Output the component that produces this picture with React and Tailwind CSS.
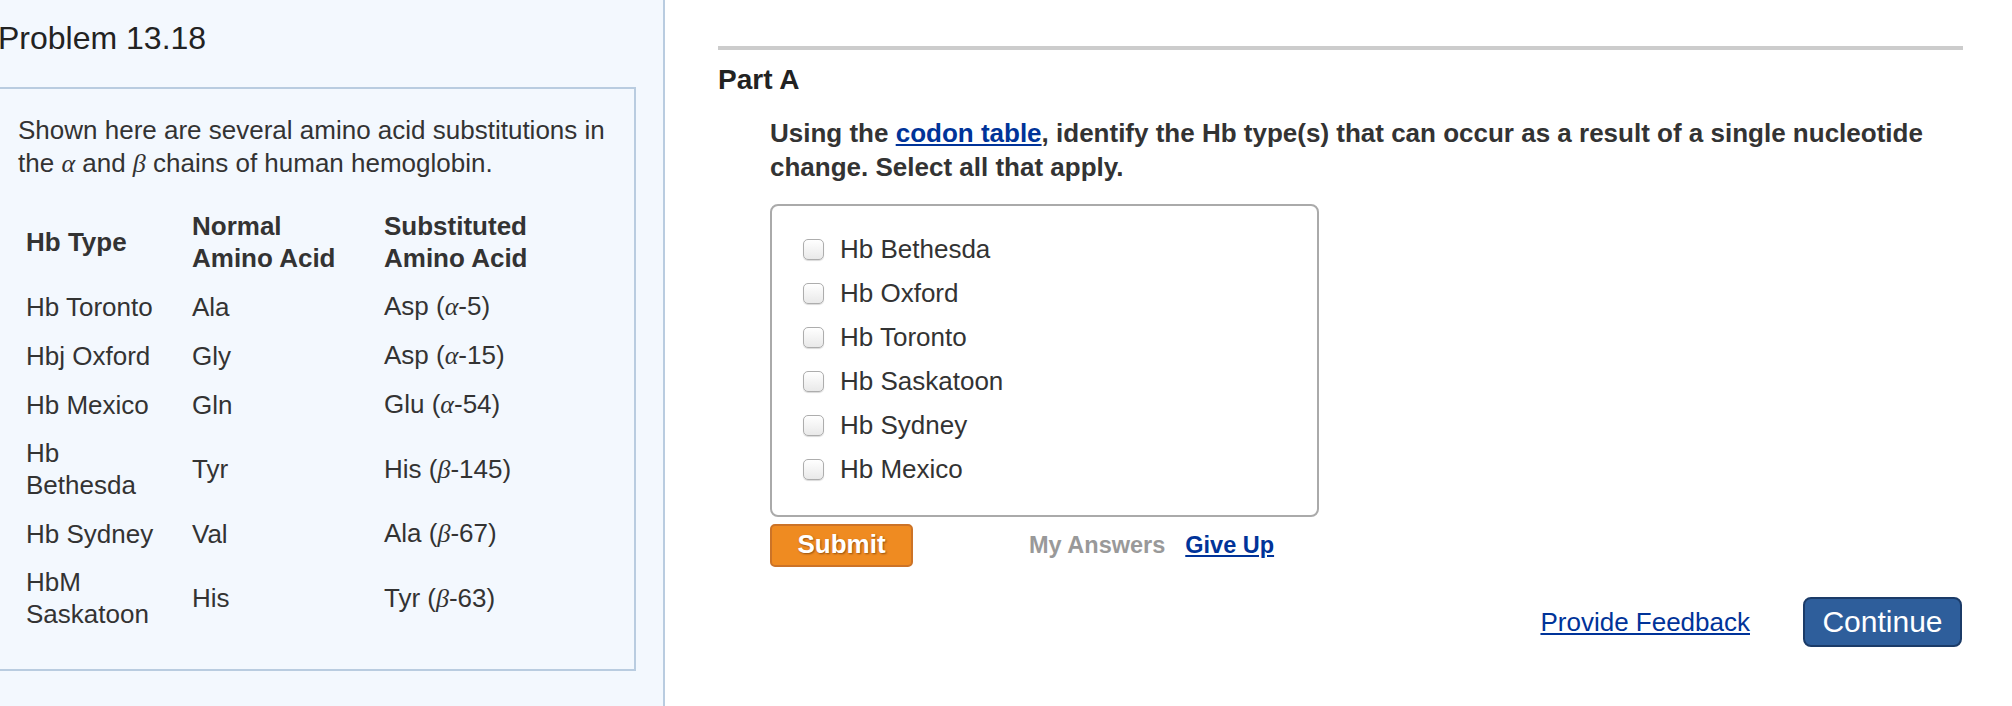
import React from "react";

const Alpha = () => (
  <span className="italic" style={{ fontFamily: '"Liberation Serif", "DejaVu Serif", serif' }}>α</span>
);
const Beta = () => (
  <span className="italic" style={{ fontFamily: '"Liberation Serif", "DejaVu Serif", serif' }}>β</span>
);

const rows = [
  { hb: "Hb Toronto", normal: "Ala", sub: <>Asp (<Alpha />-5)</> },
  { hb: "Hbj Oxford", normal: "Gly", sub: <>Asp (<Alpha />-15)</> },
  { hb: "Hb Mexico", normal: "Gln", sub: <>Glu (<Alpha />-54)</> },
  { hb: "Hb Bethesda", normal: "Tyr", sub: <>His (<Beta />-145)</> },
  { hb: "Hb Sydney", normal: "Val", sub: <>Ala (<Beta />-67)</> },
  { hb: "HbM Saskatoon", normal: "His", sub: <>Tyr (<Beta />-63)</> },
];

const options = ["Hb Bethesda", "Hb Oxford", "Hb Toronto", "Hb Saskatoon", "Hb Sydney", "Hb Mexico"];

export default function App() {
  return (
    <div
      className="flex w-[2012px] h-[706px] overflow-hidden bg-white text-[#333333]"
      style={{ fontFamily: '"Liberation Sans", Arial, Helvetica, sans-serif' }}
    >
      {/* Left panel */}
      <div className="w-[665px] shrink-0 h-full bg-[#f3f8fe] border-r-2 border-[#b9cce0] overflow-hidden">
        <div className="pt-[18px] -ml-[2px] text-[32px] leading-[40px] text-[#222]">Problem 13.18</div>
        <div className="mt-[29px] -ml-[4px] w-[640px] border-2 border-[#b9cce0] pl-[20px] pr-[20px] pt-[25px] pb-[31px]">
          <p className="text-[26px] leading-[33px]">
            Shown here are several amino acid substitutions in the <Alpha /> and <Beta /> chains of human hemoglobin.
          </p>
          <div className="mt-[22px] grid grid-cols-[166px_192px_1fr] text-[26px] leading-[32px] items-center">
            <div className="px-[8px] py-[8px] font-bold">Hb Type</div>
            <div className="px-[8px] py-[8px] font-bold">
              Normal
              <br />
              Amino Acid
            </div>
            <div className="px-[8px] py-[8px] font-bold">
              Substituted
              <br />
              Amino Acid
            </div>
            {rows.map((r) => (
              <React.Fragment key={r.hb}>
                <div className="px-[8px] py-[8px]">
                  <div className="max-w-[140px]">{r.hb}</div>
                </div>
                <div className="px-[8px] py-[8px]">{r.normal}</div>
                <div className="px-[8px] py-[8px]">{r.sub}</div>
              </React.Fragment>
            ))}
          </div>
        </div>
      </div>

      {/* Right panel */}
      <div className="flex-1 pl-[53px] pt-[46px]">
        <div className="w-[1245px]">
          <div className="h-[4px] bg-[#cccccc]" />
          <div className="mt-[13px] text-[28px] leading-[34px] font-bold text-[#222]">Part A</div>
          <div className="pl-[52px]">
            <p className="mt-[19px] text-[26px] leading-[34px] font-bold text-[#333]">
              Using the{" "}
              <a className="text-[#003399] underline" href="#">
                codon table
              </a>
              , identify the Hb type(s) that can occur as a result of a single nucleotide change. Select all that apply.
            </p>
            <div className="mt-[20px] w-[549px] h-[313px] border-2 border-[#aaaaaa] rounded-[8px] bg-white pl-[31px] pt-[21px]">
              {options.map((o) => (
                <div key={o} className="flex items-center h-[44px]">
                  <span className="w-[21px] h-[21px] rounded-[5px] border border-[#adadad] bg-gradient-to-b from-white to-[#e9e9e9] shadow-[0_1px_1px_rgba(0,0,0,0.15)]" />
                  <span className="ml-[16px] text-[26px] leading-[32px] text-[#333]">{o}</span>
                </div>
              ))}
            </div>
            <div className="mt-[7px] flex items-center">
              <button
                className="w-[143px] h-[43px] rounded-[5px] bg-[#ef8b21] border-2 border-[#cc7327] text-white font-bold text-[26px] leading-[30px] pb-[4px]"
                style={{ textShadow: "1px 1px 2px rgba(90,40,0,0.6)" }}
              >
                Submit
              </button>
              <span className="ml-[116px] text-[23.5px] font-bold text-[#999999]">My Answers</span>
              <a className="ml-[20px] text-[23.5px] font-bold text-[#003399] underline" href="#">
                Give Up
              </a>
            </div>
          </div>
          <div className="mt-[30px] flex items-center justify-end pr-[1px]">
            <a className="text-[26px] text-[#003399] underline" href="#">
              Provide Feedback
            </a>
            <button className="ml-[53px] w-[159px] h-[50px] rounded-[8px] bg-[#2e5e9b] border-2 border-[#1b3b68] text-white text-[30px] leading-[36px]">
              Continue
            </button>
          </div>
        </div>
      </div>
    </div>
  );
}
